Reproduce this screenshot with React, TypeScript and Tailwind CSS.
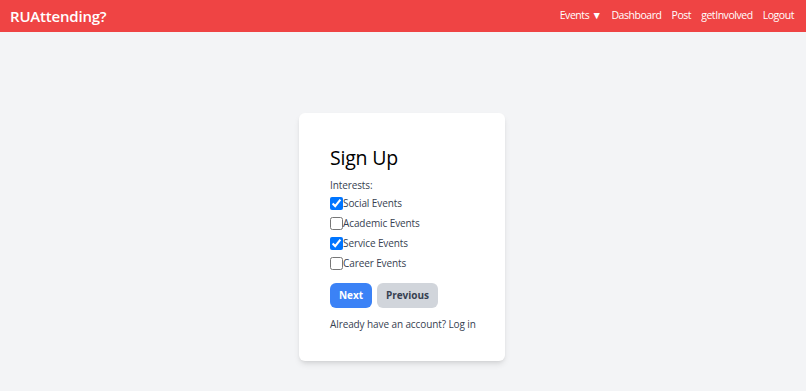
import { useState } from 'react';

const interests = [
  { id: 'social', label: 'Social Events' },
  { id: 'academic', label: 'Academic Events' },
  { id: 'service', label: 'Service Events' },
  { id: 'career', label: 'Career Events' },
];

export default function App() {
  const [checked, setChecked] = useState<Record<string, boolean>>({
    social: true,
    academic: false,
    service: true,
    career: false,
  });

  return (
    <div className="min-h-screen bg-[#f3f4f6] font-['Open_Sans',sans-serif] text-[#374151]">
      <nav className="h-8 bg-[#ef4444] flex items-center justify-between pl-[10px] pr-3 text-white">
        <span className="text-[15px] font-semibold tracking-[-0.2px]">RUAttending?</span>
        <div className="flex items-center gap-[10px] text-[10.5px] tracking-[-0.45px]">
          <span>Events ▼</span>
          <span>Dashboard</span>
          <span>Post</span>
          <span>getInvolved</span>
          <span>Logout</span>
        </div>
      </nav>

      <main className="flex justify-center pt-[81px]">
        <div className="w-[206px] h-[248px] mr-[2px] bg-white rounded-md shadow-md px-[31px] pt-[31px]">
          <h1 className="text-[19.5px] font-medium text-black leading-7 tracking-[-0.2px]">Sign Up</h1>
          <p className="mt-[5px] text-[10px] leading-4 tracking-[-0.1px]">Interests:</p>
          <div className="flex flex-col">
            {interests.map((item) => (
              <label key={item.id} className="flex items-center h-5 text-[10px] tracking-[-0.1px]">
                <input
                  type="checkbox"
                  className="m-0 w-[13px] h-[13px] accent-[#0075ff]"
                  checked={checked[item.id]}
                  onChange={() => setChecked({ ...checked, [item.id]: !checked[item.id] })}
                />
                {item.label}
              </label>
            ))}
          </div>
          <div className="mt-[10px] flex gap-[5px]">
            <button className="h-[25px] w-[42px] rounded-md bg-[#3b82f6] text-white text-[10px] font-bold">
              Next
            </button>
            <button className="h-[25px] w-[61px] rounded-md bg-[#d1d5db] text-[#374151] text-[10px] font-bold">
              Previous
            </button>
          </div>
          <p className="mt-[8px] leading-4 text-[10px] tracking-[-0.1px] whitespace-nowrap">Already have an account? Log in</p>
        </div>
      </main>
    </div>
  );
}
